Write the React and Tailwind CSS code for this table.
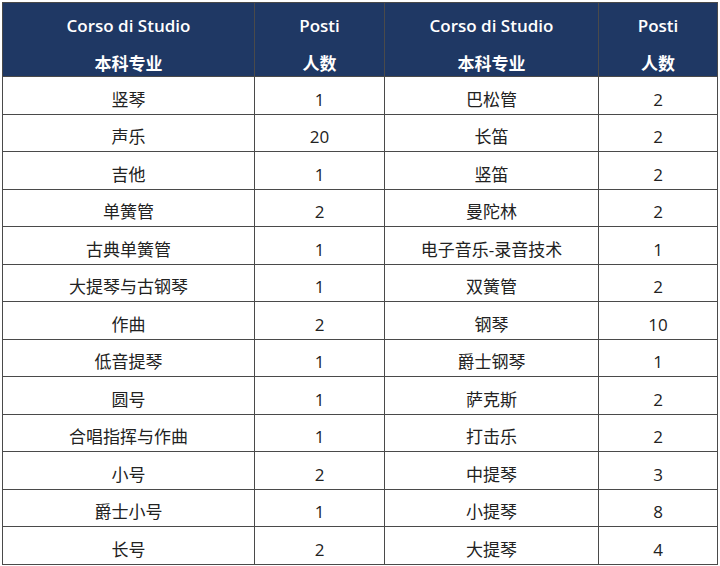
import React from "react";

const rows = [
    ["竖琴", "1", "巴松管", "2"],
    ["声乐", "20", "长笛", "2"],
    ["吉他", "1", "竖笛", "2"],
    ["单簧管", "2", "曼陀林", "2"],
    ["古典单簧管", "1", "电子音乐-录音技术", "1"],
    ["大提琴与古钢琴", "1", "双簧管", "2"],
    ["作曲", "2", "钢琴", "10"],
    ["低音提琴", "1", "爵士钢琴", "1"],
    ["圆号", "1", "萨克斯", "2"],
    ["合唱指挥与作曲", "1", "打击乐", "2"],
    ["小号", "2", "中提琴", "3"],
    ["爵士小号", "1", "小提琴", "8"],
    ["长号", "2", "大提琴", "4"],
];

const font = { fontFamily: '"Open Sans", "Noto Sans CJK SC", sans-serif' };

function HeadCell({ top, bottom }) {
    return (
        <th className="border border-[#4a4a4a] p-0 font-semibold text-white text-[17px] text-center align-top">
            <div className="h-[48px] pt-[12px] leading-[22px]">{top}</div>
            <div className="h-[25px] leading-[25px]">{bottom}</div>
        </th>
    );
}

export default function App() {
    return (
        <div className="w-[720px] h-[566px] bg-white pt-[2px] pl-[2px]" style={font}>
            <table className="border-collapse table-fixed w-[715px] border border-[#4a4a4a]">
                <colgroup>
                    <col className="w-[252px]" />
                    <col className="w-[130px]" />
                    <col className="w-[214px]" />
                    <col className="w-[119px]" />
                </colgroup>
                <thead>
                    <tr className="bg-[#1f3864] h-[74px]">
                        <HeadCell top="Corso di Studio" bottom="本科专业" />
                        <HeadCell top="Posti" bottom="人数" />
                        <HeadCell top="Corso di Studio" bottom="本科专业" />
                        <HeadCell top="Posti" bottom="人数" />
                    </tr>
                </thead>
                <tbody>
                    {rows.map((r, i) => (
                        <tr key={i} className="h-[37.5px]">
                            {r.map((c, j) => (
                                <td key={j} className="border border-[#4a4a4a] p-0 pt-[8px] text-center text-[17px] text-[#222] leading-none">
                                    {c}
                                </td>
                            ))}
                        </tr>
                    ))}
                </tbody>
            </table>
        </div>
    );
}
